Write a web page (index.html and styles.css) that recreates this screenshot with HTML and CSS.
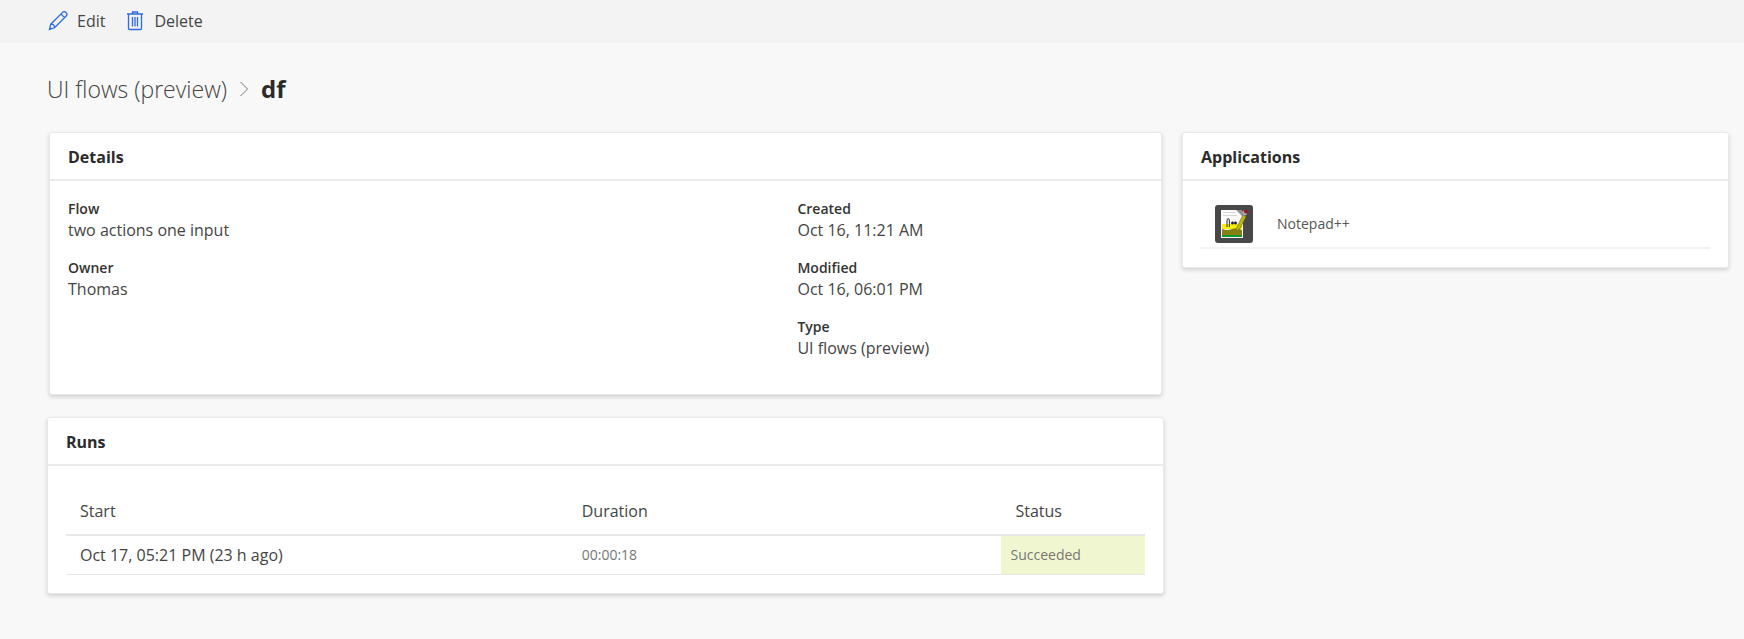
FILE: index.html
```html
<!DOCTYPE html>
<html lang="en">
<head>
<meta charset="utf-8">
<title>df - UI flows (preview)</title>
<link rel="stylesheet" href="styles.css">
</head>
<body>
<header class="toolbar">
  <button class="command" type="button">
    <svg class="command-icon" viewBox="0 0 20 20" aria-hidden="true"><path d="M1.500 18.500l1.300-5.300L14.600 1.400a2.300 2.300 0 0 1 3.200 0l.4.4a2.300 2.300 0 0 1 0 3.200L6.600 16.800zM13 3l3.600 3.600M2.800 13.200c2.200 0 3.700 1.400 3.800 3.600M1.800 16.600l1.600 1.500"/></svg>
    <span>Edit</span>
  </button>
  <button class="command" type="button">
    <svg class="command-icon" viewBox="0 0 20 20" aria-hidden="true"><path d="M2 3h16M7.500 3V1h5v2M3.500 3v14.500q0 1 1 1h11q1 0 1-1V3M7.500 6v9.500M10 6v9.500M12.500 6v9.500"/></svg>
    <span>Delete</span>
  </button>
</header>
<main class="page">
  <nav class="breadcrumb" aria-label="Breadcrumb">
    <a class="breadcrumb-link" href="#">UI flows (preview)</a>
    <svg class="chevron" viewBox="0 0 10 16" aria-hidden="true"><path d="M1.500 1L8.500 8l-7 7"/></svg>
    <h1 class="breadcrumb-current">df</h1>
  </nav>
  <div class="columns">
    <div class="primary">
      <section class="card details">
        <h2 class="card-title">Details</h2>
        <div class="details-body">
          <dl class="fields">
            <div class="field"><dt>Flow</dt><dd>two actions one input</dd></div>
            <div class="field"><dt>Owner</dt><dd>Thomas</dd></div>
          </dl>
          <dl class="fields">
            <div class="field"><dt>Created</dt><dd>Oct 16, 11:21 AM</dd></div>
            <div class="field"><dt>Modified</dt><dd>Oct 16, 06:01 PM</dd></div>
            <div class="field"><dt>Type</dt><dd>UI flows (preview)</dd></div>
          </dl>
        </div>
      </section>
      <section class="card">
        <h2 class="card-title">Runs</h2>
        <div class="runs-body">
          <table class="runs">
            <thead>
              <tr><th class="col-start">Start</th><th class="col-duration">Duration</th><th class="col-status">Status</th></tr>
            </thead>
            <tbody>
              <tr><td>Oct 17, 05:21 PM (23 h ago)</td><td class="duration">00:00:18</td><td class="status">Succeeded</td></tr>
            </tbody>
          </table>
        </div>
      </section>
    </div>
    <aside class="card">
      <h2 class="card-title">Applications</h2>
      <ul class="apps">
        <li class="app">
          <svg class="app-icon" viewBox="0 0 38 38" aria-hidden="true">
            <rect width="38" height="38" rx="3" fill="#484848"/>
            <path d="M6 5h16l6 6v22H6z" fill="#fafafa"/>
            <path d="M8 7.500h12M8 10.500h14" stroke="#d6d6d6"/>
            <path d="M7 19h20v5H7z" fill="#f4f000"/>
            <path d="M7 24q5 2 10 0t10 1v5H7z" fill="#858016"/>
            <path d="M7 30h20v2H7z" fill="#16962c"/>
            <path d="M21 5l6 6V5z" fill="#909090"/>
            <path d="M12 22v-6q0-2.500 1.200-2.500t1.200 2.500v6" fill="none" stroke="#333"/>
            <path d="M16 18h6M17.500 16.500v3M20.500 16.500v3" stroke="#222" stroke-width="1.500"/>
            <path d="M21.500 26.500l.5-4.500 6-12 3 1.500-6 12z" fill="#c2b61a" stroke="#766f12" stroke-width=".7"/>
            <circle cx="29.500" cy="8" r="2.500" fill="#aaa"/>
            <circle cx="31" cy="6.500" r="2" fill="#9c1420"/>
          </svg>
          <span>Notepad++</span>
        </li>
      </ul>
    </aside>
  </div>
</main>
</body>
</html>
```
FILE: styles.css
```css
* {
  box-sizing: border-box;
}

body {
  margin: 0;
  background: #f8f8f8;
  color: #444;
  font: 16px/22px "Open Sans", "Noto Sans", sans-serif;
}

h1, h2, dl, dd, ul {
  margin: 0;
  padding: 0;
}

.toolbar {
  display: flex;
  gap: 20px;
  padding: 10px 48px 11px;
  background: #f3f3f3;
}

.command {
  display: flex;
  align-items: center;
  gap: 9px;
  padding: 0;
  border: 0;
  background: none;
  color: inherit;
  font: inherit;
}

.command-icon {
  width: 20px;
  height: 20px;
  fill: none;
  stroke: #2b6be4;
  stroke-width: 1.3;
}

.page {
  padding: 28px 15px 28px 47px;
}

.breadcrumb {
  display: flex;
  align-items: center;
  gap: 12px;
  margin-bottom: 25px;
  font-size: 23px;
  line-height: 36px;
}

.breadcrumb-link {
  color: #444;
  font-weight: 300;
  text-decoration: none;
}

.breadcrumb-current {
  color: #2b2b2b;
  font-size: 24px;
  font-weight: 700;
}

.chevron {
  width: 10px;
  height: 16px;
  fill: none;
  stroke: #777;
}

.columns {
  display: grid;
  grid-template-columns: 1117fr 547fr;
  align-items: start;
  gap: 18px;
}

.primary {
  display: grid;
  gap: 22px;
}

.card {
  border: 1px solid #e9e9e9;
  border-radius: 3px;
  background: #fff;
  box-shadow: 0 2px 4px rgba(0, 0, 0, 0.16);
}

.details {
  margin: 0 2px;
}

.card-title {
  padding: 13px 18px 11px;
  border-bottom: 2px solid #ebebeb;
  color: #2b2b2b;
  font-size: 16px;
  font-weight: 700;
}

.details-body {
  display: grid;
  grid-template-columns: 19fr 9fr;
  padding: 18px;
}

.field {
  padding-bottom: 17px;
}

.field dt {
  color: #333;
  font-size: 14px;
  font-weight: 600;
  line-height: 20px;
}

.runs-body {
  padding: 22px 18px 18px;
}

.runs {
  width: 100%;
  border-collapse: collapse;
  table-layout: fixed;
}

.runs th {
  padding: 12px 14px;
  border-bottom: 2px solid #e8e8e8;
  font-weight: 400;
  text-align: left;
}

.runs td {
  padding: 8px 14px;
  border-bottom: 1px solid #e8e8e8;
}

.col-start {
  width: 46.5%;
}

.col-duration {
  width: 40.2%;
}

.runs .duration {
  color: #777;
  font-size: 14px;
}

.runs .status {
  padding-left: 9px;
  background: #f0f7d0;
  color: #777;
  font-size: 14px;
}

.apps {
  padding: 24px 18px 18px;
  list-style: none;
}

.app {
  display: flex;
  align-items: center;
  gap: 24px;
  padding: 0 14px 4px;
  border-bottom: 2px solid #f3f3f3;
  color: #555;
  font-size: 14px;
}

.app-icon {
  width: 38px;
  height: 38px;
}
```
